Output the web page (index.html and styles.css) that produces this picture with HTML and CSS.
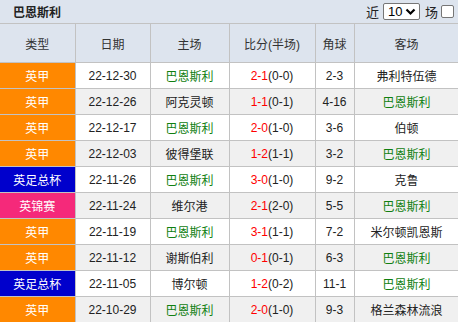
FILE: index.html
```html
<!DOCTYPE html>
<html lang="zh">
<head>
<meta charset="utf-8">
<link rel="stylesheet" href="styles.css">
</head>
<body>
<div class="panel">
  <div class="titlebar">
    <span class="title">巴恩斯利</span>
    <div class="filter">
      <span>近</span>
      <span class="select">10<svg width="11" height="8" viewBox="0 0 11 8"><path d="M1.5 1.5 L5.5 5.5 L9.5 1.5" fill="none" stroke="#000" stroke-width="2.2"/></svg></span>
      <span>场</span>
      <span class="check"></span>
    </div>
  </div>
  <table class="grid">
    <colgroup>
      <col class="c1"><col class="c2"><col class="c3"><col class="c4"><col class="c5"><col class="c6">
    </colgroup>
    <thead>
      <tr><th>类型</th><th>日期</th><th>主场</th><th>比分(半场)</th><th>角球</th><th>客场</th></tr>
    </thead>
    <tbody>
      <tr><td class="lg epl">英甲</td><td>22-12-30</td><td class="us">巴恩斯利</td><td><span class="ft">2-1</span>(0-0)</td><td>2-3</td><td>弗利特伍德</td></tr>
      <tr class="alt"><td class="lg epl">英甲</td><td>22-12-26</td><td>阿克灵顿</td><td><span class="ft">1-1</span>(0-1)</td><td>4-16</td><td class="us">巴恩斯利</td></tr>
      <tr><td class="lg epl">英甲</td><td>22-12-17</td><td class="us">巴恩斯利</td><td><span class="ft">2-0</span>(1-0)</td><td>3-6</td><td>伯顿</td></tr>
      <tr class="alt"><td class="lg epl">英甲</td><td>22-12-03</td><td>彼得堡联</td><td><span class="ft">1-2</span>(1-1)</td><td>3-2</td><td class="us">巴恩斯利</td></tr>
      <tr><td class="lg fa">英足总杯</td><td>22-11-26</td><td class="us">巴恩斯利</td><td><span class="ft">3-0</span>(1-0)</td><td>9-2</td><td>克鲁</td></tr>
      <tr class="alt"><td class="lg tr">英锦赛</td><td>22-11-24</td><td>维尔港</td><td><span class="ft">2-1</span>(2-0)</td><td>5-5</td><td class="us">巴恩斯利</td></tr>
      <tr><td class="lg epl">英甲</td><td>22-11-19</td><td class="us">巴恩斯利</td><td><span class="ft">3-1</span>(1-1)</td><td>7-2</td><td>米尔顿凯恩斯</td></tr>
      <tr class="alt"><td class="lg epl">英甲</td><td>22-11-12</td><td>谢斯伯利</td><td><span class="ft">0-1</span>(0-1)</td><td>6-3</td><td class="us">巴恩斯利</td></tr>
      <tr><td class="lg fa">英足总杯</td><td>22-11-05</td><td>博尔顿</td><td><span class="ft">1-2</span>(0-2)</td><td>11-1</td><td class="us">巴恩斯利</td></tr>
      <tr class="alt"><td class="lg epl">英甲</td><td>22-10-29</td><td class="us">巴恩斯利</td><td><span class="ft">2-0</span>(1-0)</td><td>9-3</td><td>格兰森林流浪</td></tr>
    </tbody>
  </table>
</div>
</body>
</html>
```
FILE: styles.css
```css
html, body {
  margin: 0;
  padding: 0;
  overflow: hidden;
  background: #fff;
}
body {
  font-family: "Liberation Sans", "Noto Sans CJK SC", sans-serif;
  font-size: 12px;
  color: #222;
}
.panel {
  width: 459px;
}
.titlebar {
  height: 23px;
  background: #dde4ee;
  border-bottom: 1px solid #c2c2c2;
  display: flex;
  align-items: center;
  justify-content: space-between;
  padding: 0 4px 0 13px;
  box-sizing: content-box;
  width: 441px;
}
.title {
  font-weight: bold;
  font-size: 12px;
  color: #222;
}
.filter {
  display: flex;
  align-items: center;
  gap: 3px;
  color: #222;
  font-size: 13px;
}
.select {
  display: flex;
  align-items: center;
  justify-content: space-between;
  box-sizing: border-box;
  width: 37px;
  height: 17px;
  border: 1px solid #767676;
  border-radius: 2px;
  background: #fff;
  padding: 0 3px 0 4px;
  font-size: 13px;
  color: #000;
  margin: 0 2px 0 1px;
}
.check {
  display: inline-block;
  box-sizing: border-box;
  width: 13px;
  height: 13px;
  border: 1px solid #767676;
  border-radius: 2px;
  background: #fff;
}
.grid {
  border-collapse: collapse;
  table-layout: fixed;
  width: 459px;
}
.c1 { width: 75px; }
.c2 { width: 75px; }
.c3 { width: 79px; }
.c4 { width: 86px; }
.c5 { width: 39px; }
.c6 { width: 105px; }
.grid th,
.grid td {
  border-right: 1px solid #c2c2c2;
  border-bottom: 1px solid #c2c2c2;
  padding: 0;
  text-align: center;
  white-space: nowrap;
  overflow: hidden;
}
.grid th {
  height: 38px;
  background: #dde4ee;
  font-weight: normal;
  color: #333;
  font-size: 12px;
}
.grid td {
  height: 25px;
  color: #222;
}
.grid tr.alt td {
  background: #f0f0f0;
}
.grid td.lg {
  color: #fff;
}
.grid tr td.epl { background: #ff8800; }
.grid tr td.fa { background: #0000cc; }
.grid tr td.tr { background: #f5297a; }
.grid td.us {
  color: #108010;
}
.ft {
  color: #ff0000;
}
```
